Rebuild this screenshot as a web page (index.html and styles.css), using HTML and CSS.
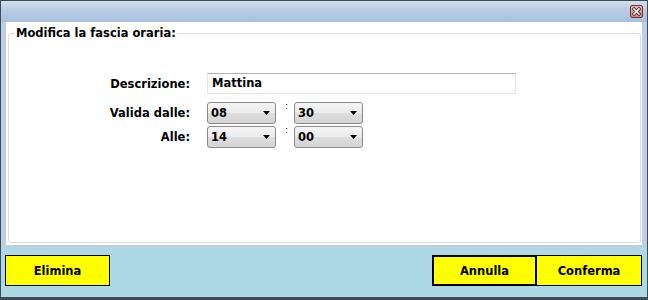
FILE: index.html
```html
<!DOCTYPE HTML>
<html>
<head>
    <title>Modifica la fascia oraria</title>
    <link rel="stylesheet" href="styles.css">
</head>
<body>
    <div class="window">
        <div class="titlebar">
            <span class="close-btn">
                <svg width="11" height="11" viewBox="0 0 11 11">
                    <path d="M3 3 L8 8 M8 3 L3 8" stroke="#5a2020" stroke-width="3.2" stroke-linecap="square"/>
                    <path d="M3 3 L8 8 M8 3 L3 8" stroke="#ffffff" stroke-width="1.6" stroke-linecap="square"/>
                </svg>
            </span>
        </div>

        <div class="client">
            <fieldset class="group">
                <legend class="group-title">Modifica la fascia oraria:</legend>

                <div class="form">
                    <div class="row">
                        <label class="lbl">Descrizione:</label>
                        <div class="textbox">Mattina</div>
                    </div>

                    <div class="row row-second">
                        <label class="lbl">Valida dalle:</label>
                        <div class="combo"><span>08</span><svg class="arrow" width="7" height="4"><polygon points="0,0 7,0 3.5,4"/></svg></div>
                        <span class="colon">:</span>
                        <div class="combo"><span>30</span><svg class="arrow" width="7" height="4"><polygon points="0,0 7,0 3.5,4"/></svg></div>
                    </div>

                    <div class="row row-third">
                        <label class="lbl">Alle:</label>
                        <div class="combo"><span>14</span><svg class="arrow" width="7" height="4"><polygon points="0,0 7,0 3.5,4"/></svg></div>
                        <span class="colon">:</span>
                        <div class="combo"><span>00</span><svg class="arrow" width="7" height="4"><polygon points="0,0 7,0 3.5,4"/></svg></div>
                    </div>
                </div>
            </fieldset>
        </div>

        <div class="footer">
            <button class="btn">Elimina</button>
            <div class="btn-pair">
                <button class="btn btn-focus">Annulla</button>
                <button class="btn btn-last">Conferma</button>
            </div>
        </div>
    </div>
</body>
</html>
```

FILE: styles.css
```css
body{
    margin:0;
    font-family:"DejaVu Sans", sans-serif;
    font-size:11.5px;
    font-weight:bold;
    color:black;
}

.window{
    width:648px;
    height:300px;
    box-sizing:border-box;
    border:1px solid #3d4b57;
    border-bottom-width:3px;
    background-color:#bccfe4;
    display:flex;
    flex-direction:column;
}

.titlebar{
    height:21px;
    flex:none;
    background:linear-gradient(to bottom, #d3deeb 0%, #b9cce3 45%, #a8c0de 100%);
    display:flex;
    justify-content:flex-end;
    align-items:flex-start;
    padding-right:4px;
}

.close-btn{
    margin-top:4px;
    width:13px;
    height:13px;
    box-sizing:border-box;
    border:1px solid #6b3434;
    border-radius:2px;
    background:linear-gradient(to bottom, #e4b8b4, #c98a86);
    display:flex;
    align-items:center;
    justify-content:center;
}

.close-btn svg{
    display:block;
}

.client{
    height:223px;
    flex:none;
    margin:0 5px;
    background-color:white;
    border-bottom:2px solid #c6cbd0;
    display:flex;
    flex-direction:column;
}

.group{
    flex:1;
    min-width:0;
    margin:4px 1px 2px 2px;
    padding:0;
    border:1px solid #d5dee6;
    border-radius:3px;
}

.group-title{
    margin-left:6px;
    padding:0 1px;
    line-height:14px;
}

.form{
    margin-top:33px;
}

.row{
    display:flex;
    align-items:center;
}

.row-second{
    margin-top:8px;
}

.row-third{
    margin-top:2px;
}

.lbl{
    width:181px;
    margin-right:17px;
    text-align:right;
}

.textbox{
    width:309px;
    height:21px;
    box-sizing:border-box;
    border:1px solid #e2e6ea;
    border-top-color:#aeb1b6;
    padding-left:4px;
    line-height:19px;
}

.combo{
    width:69px;
    height:22px;
    box-sizing:border-box;
    border:1px solid #8a8a8a;
    border-radius:3px;
    background:linear-gradient(to bottom, #f5f5f5 0%, #ebebeb 48%, #dedede 52%, #d4d4d4 100%);
    display:flex;
    align-items:center;
    justify-content:space-between;
    padding:0 5px 0 3px;
    line-height:20px;
}

.arrow{
    display:block;
}

.colon{
    width:18px;
    box-sizing:border-box;
    padding-left:9px;
    align-self:flex-start;
    font-size:9px;
    font-weight:normal;
    line-height:9px;
}

.footer{
    flex:1;
    background-color:#add8e6;
    display:flex;
    justify-content:space-between;
    align-items:flex-start;
    padding:8px 5px 0 4px;
}

.btn-pair{
    display:flex;
}

.btn{
    width:105px;
    height:31px;
    box-sizing:border-box;
    border:1px solid black;
    background-color:#ffff00;
    font-family:"DejaVu Sans", sans-serif;
    font-size:11.5px;
    font-weight:bold;
    color:black;
    padding:0;
    margin:0;
}

.btn-focus{
    border-width:2px;
}

.btn-last{
    border-left:none;
}
```
